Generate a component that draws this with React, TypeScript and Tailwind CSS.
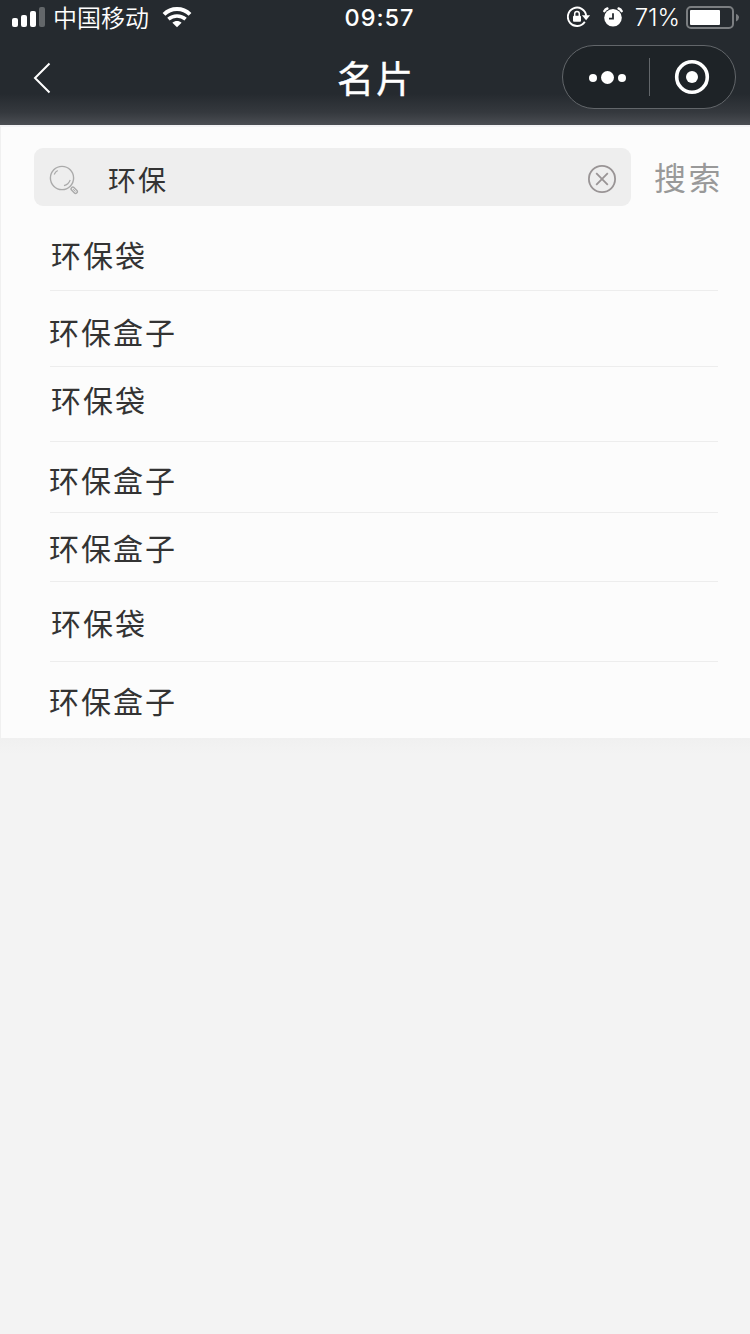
const rows = [
  { text: "环保袋", box: "h-[85px] pt-[34px]", indent: "pl-[1px]" },
  { text: "环保盒子", box: "h-[76px] pt-[26px]", indent: "-ml-px" },
  { text: "环保袋", box: "h-[75px] pt-[18px]", indent: "pl-[1px]" },
  { text: "环保盒子", box: "h-[71px] pt-[23px]", indent: "-ml-px" },
  { text: "环保盒子", box: "h-[69px] pt-[20px]", indent: "-ml-px" },
  { text: "环保袋", box: "h-[80px] pt-[26px]", indent: "pl-[1px]" },
  { text: "环保盒子", box: "h-[76px] pt-[24px]", indent: "-ml-px" },
];

function SignalIcon() {
  return (
    <svg className="-mt-[2px]" width="34" height="20" viewBox="0 0 34 20" fill="#fff">
      <rect x="0" y="11" width="6" height="9" rx="2" />
      <rect x="9" y="8" width="6" height="12" rx="2" />
      <rect x="18" y="4" width="6" height="16" rx="2" />
      <rect x="27" y="0" width="6" height="20" rx="2" fill="#63676a" />
    </svg>
  );
}

function WifiIcon() {
  return (
    <svg className="-mt-[2px]" width="30" height="22" viewBox="0 0 30 22" fill="none" stroke="#fff" strokeWidth="4">
      <path d="M2 8.400C9.200 1.300 20.800 1.300 28 8.400" />
      <path d="M6.400 13.200C11.300 9 18.700 9 23.600 13.200" strokeWidth="3.600" />
      <path d="M15 21.300l-4.600-4.600c2.600-2.300 6.600-2.300 9.200 0z" fill="#fff" stroke="none" />
    </svg>
  );
}

function RotationLockIcon() {
  return (
    <svg className="-mt-[2px]" width="24" height="22" viewBox="0 0 24 22" fill="none" stroke="#fff" strokeWidth="1.900">
      <path d="M17.800 15.800A9.200 9.200 0 1 1 19.200 9.800" />
      <path d="M14.900 9.300h8.200L19.100 14.200z" fill="#fff" stroke="none" />
      <rect x="6" y="9.800" width="8" height="6" rx="1" fill="#fff" stroke="none" />
      <path d="M7.700 10.300V7.800a2.300 2.300 0 0 1 4.600 0v2.500" strokeWidth="1.500" />
    </svg>
  );
}

function AlarmIcon() {
  return (
    <svg className="-mt-[2px]" width="20" height="20" viewBox="0 0 20 20" fill="none">
      <circle cx="10" cy="10.800" r="8.800" fill="#fff" />
      <path d="M10 6.200v5.400H6" stroke="#252a2f" strokeWidth="1.800" />
      <path d="M1.300 4.200Q2.200 2.200 4.400 1.500M18.700 4.200Q17.800 2.200 15.600 1.500" stroke="#fff" strokeWidth="2.400" strokeLinecap="round" />
    </svg>
  );
}

function BatteryIcon() {
  return (
    <svg className="-mt-px" width="54" height="24" viewBox="0 0 54 24" fill="none">
      <rect x="1" y="1" width="46" height="21" rx="4" stroke="#7b7e81" strokeWidth="2" />
      <rect x="4" y="4" width="30" height="15" rx="1" fill="#fff" />
      <path d="M50 8q3 1 3 3.500T50 15.500z" fill="#7b7e81" />
    </svg>
  );
}

function SearchIcon() {
  return (
    <svg width="30" height="30" viewBox="0 0 30 30" fill="none" stroke="#aaa" strokeWidth="1.400">
      <circle cx="13" cy="13" r="11.600" />
      <path d="M5.200 9.500Q6.300 7 8.700 5.600M15 20.600Q19.500 19.500 21.200 15" strokeWidth="1.200" />
      <rect x="-1.700" y="-3.600" width="3.400" height="7.200" rx="1.500" transform="translate(25.200 25.300) rotate(-45)" />
      <path d="M24 24.100l2.400 2.400" strokeWidth="1" />
    </svg>
  );
}

function StatusBar() {
  return (
    <div className="grid h-9 grid-cols-3 items-center text-white">
      <div className="flex h-9 items-center pl-3">
        <SignalIcon />
        <span className="mt-px ml-[7px] text-[24px] leading-6 font-[350]">中国移动</span>
        <span className="ml-[13px]">
          <WifiIcon />
        </span>
      </div>
      <div className="h-9 pl-[9px] text-center text-[23.500px] leading-[35px] font-medium tracking-[1px]">09:57</div>
      <div className="flex h-9 items-center justify-end pr-[10px]">
        <RotationLockIcon />
        <span className="ml-3">
          <AlarmIcon />
        </span>
        <span className="mr-[6px] ml-[12px] text-[24px] leading-9 font-light">71%</span>
        <BatteryIcon />
      </div>
    </div>
  );
}

function NavBar() {
  return (
    <div className="grid h-[89px] grid-cols-3 pt-[9px] text-white">
      <div className="flex h-[66px] items-center pl-[33px]">
        <svg width="18" height="32" viewBox="0 0 18 32" fill="none" stroke="#fff" strokeWidth="2">
          <path d="M16.500 1.500L2 16l14.500 14.500" />
        </svg>
      </div>
      <h1 className="pl-[2px] text-center text-[37px] leading-[69px] font-normal tracking-[2px] [-webkit-text-stroke:0.4px_#fff]">名片</h1>
      <div className="flex justify-end pr-[14px]">
        <div className="flex h-16 w-[174px] items-center rounded-full border border-[#62666a] bg-[#1e2327]">
          <svg width="172" height="62" viewBox="0 0 172 62" fill="#fff">
            <circle cx="30" cy="32" r="4" />
            <circle cx="44.500" cy="31.500" r="6.500" />
            <circle cx="59" cy="32" r="4" />
            <rect x="86" y="12" width="1" height="38" fill="#62666a" />
            <circle cx="129" cy="31" r="15.300" fill="none" stroke="#fff" strokeWidth="3.600" />
            <circle cx="129" cy="31" r="6" />
          </svg>
        </div>
      </div>
    </div>
  );
}

export default function App() {
  return (
    <div className="min-h-[1334px] w-[750px] overflow-hidden bg-[#f3f3f3] font-['Inter','Noto_Sans_CJK_SC',sans-serif]">
      <header className="h-[125px] bg-linear-to-b from-[#252a2f] from-75% via-[#35393e] via-90% to-[#4b4e53]">
        <StatusBar />
        <NavBar />
      </header>
      <main className="h-[613px] border-t-2 border-l border-t-[#f3f3f5] border-l-[#f0f0f0] bg-[#fcfcfc] pt-[21px] text-[#333]">
        <div className="flex h-[58px] items-center pl-[33px]">
          <div className="flex h-[58px] w-[597px] items-center rounded-[9px] bg-[#eee] pr-[14px] pl-[15px]">
            <span className="pt-[5px]">
              <SearchIcon />
            </span>
            <span className="ml-[29px] flex-1 pt-[7px] text-[28px] leading-8 tracking-[2px]">环保</span>
            <svg className="mt-[4px]" width="30" height="30" viewBox="0 0 30 30" fill="none" stroke="#999495" strokeWidth="1.800">
              <circle cx="15" cy="15" r="13.100" />
              <path d="M9.200 9.200l11.600 11.600M20.800 9.200L9.200 20.800" />
            </svg>
          </div>
          <span className="mt-[3px] ml-[23px] text-[32px] leading-9 tracking-[2.500px] text-[#999]">搜索</span>
        </div>
        <ul className="mr-[32px] ml-[49px] text-[30px] leading-8 tracking-[2px]">
          {rows.map((row, i) => (
            <li key={i} className={`border-b border-[#ededed] last:border-b-0 ${row.box}`}>
              <div className={row.indent}>{row.text}</div>
            </li>
          ))}
        </ul>
      </main>
      <div className="h-4 bg-linear-to-b from-[#f0f0f0] to-[#f3f3f3]" />
    </div>
  );
}
